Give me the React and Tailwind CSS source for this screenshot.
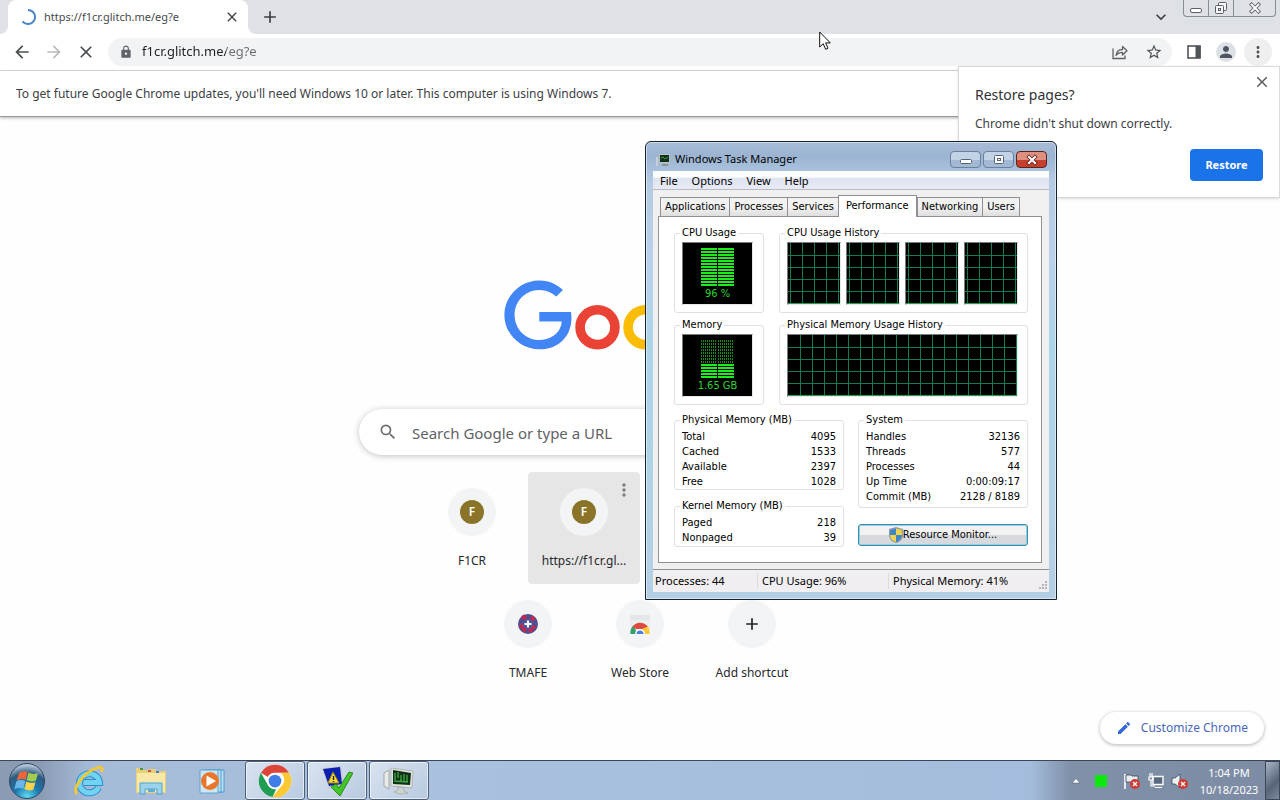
import {
  MdAdd,
  MdArrowBack,
  MdArrowForward,
  MdClose,
  MdEdit,
  MdExpandMore,
  MdLock,
  MdMoreVert,
  MdPerson,
  MdSearch,
  MdStarBorder,
} from 'react-icons/md'

const ChromeLogo = ({ className }) => (
  <svg viewBox="0 0 48 48" className={className} aria-hidden="true">
    <circle cx="24" cy="24" r="23" fill="#fff" />
    <path d="M24 1a23 23 0 0 1 19.9 11.5H24a11.5 11.5 0 0 0-10 5.8L4.1 12.5A23 23 0 0 1 24 1z" fill="#dc4437" />
    <path d="M4.1 12.5 14 29.7a11.5 11.5 0 0 0 11.8 5.6L20.5 46.7A23 23 0 0 1 4.1 12.5z" fill="#1f9d55" />
    <path d="M43.9 12.5A23 23 0 0 1 20.5 46.7L34 29.7a11.5 11.5 0 0 0-2-17.2z" fill="#fcc934" />
    <circle cx="24" cy="24" r="11.5" fill="#fff" />
    <circle cx="24" cy="24" r="9" fill="#3f7ee8" />
  </svg>
)

const GoogleLogo = () => (
  <svg viewBox="0 0 272 92" className="h-[92px] w-[272px]" role="img" aria-label="Google">
    <path
      d="M35.29 41.41V32H67c.31 1.64.47 3.58.47 5.68 0 7.06-1.93 15.79-8.15 22.01-6.05 6.3-13.78 9.66-24.02 9.66C16.32 69.35.36 53.89.36 34.91.36 15.93 16.32.47 35.3.47c10.5 0 17.98 4.12 23.6 9.49l-6.64 6.64c-4.03-3.78-9.49-6.72-16.97-6.72-13.86 0-24.7 11.17-24.7 25.03 0 13.86 10.84 25.03 24.7 25.03 8.99 0 14.11-3.61 17.39-6.89 2.66-2.66 4.41-6.46 5.1-11.65z"
      fill="#4285f4"
    />
    <circle cx="93.5" cy="47.2" r="17.4" fill="none" stroke="#ea4335" strokeWidth="9.6" />
    <circle cx="141.5" cy="47.2" r="17.4" fill="none" stroke="#fbbc05" strokeWidth="9.6" />
  </svg>
)

const TabStrip = () => (
  <div className="flex h-[34px] items-stretch bg-[#dee1e6]">
    <div className="w-2 bg-white">
      <div className="h-full rounded-br-lg bg-[#dee1e6]" />
    </div>
    <div className="flex w-[240px] items-center rounded-t-lg bg-white pl-3 pr-2">
      <svg viewBox="0 0 16 16" className="size-4" fill="none" aria-hidden="true">
        <path d="M8 1a7 7 0 1 1-5.500 11.300" stroke="#4a86d0" strokeWidth="2" />
      </svg>
      <span className="ml-2 grow text-[11px] text-[#45494d]">https://f1cr.glitch.me/eg?e</span>
      <button aria-label="Close tab" className="flex size-4 items-center justify-center">
        <MdClose className="size-4 text-[#3c4043]" />
      </button>
    </div>
    <div className="w-2 bg-white">
      <div className="h-full rounded-bl-lg bg-[#dee1e6]" />
    </div>
    <button aria-label="New tab" className="ml-1 flex w-5 items-center justify-center">
      <MdAdd className="size-5 text-[#3c4043]" />
    </button>
    <div className="grow" />
    <button aria-label="Search tabs" className="mr-3 flex w-5 items-center justify-center">
      <MdExpandMore className="size-5 text-[#3c4043]" />
    </button>
    <div className="mr-1 flex h-[17px] rounded-b border border-t-0 border-[#8a8f96]">
      <button aria-label="Minimize" className="flex w-[25px] items-center justify-center border-r border-[#8a8f96]">
        <svg viewBox="0 0 12 12" className="size-3" fill="#fff" stroke="#5b6068" aria-hidden="true">
          <rect x="0.5" y="6.5" width="11" height="4" rx="1.5" />
        </svg>
      </button>
      <button aria-label="Restore down" className="flex w-[25px] items-center justify-center border-r border-[#8a8f96]">
        <svg viewBox="0 0 14 14" className="size-[14px]" fill="#f4f5f7" stroke="#5b6068" aria-hidden="true">
          <rect x="4.5" y="1.5" width="8" height="8" rx="1" />
          <rect x="1.5" y="4.5" width="8" height="8" rx="1" />
          <rect x="4.5" y="7.5" width="2" height="2" />
        </svg>
      </button>
      <button aria-label="Close" className="flex w-[41px] items-center justify-center">
        <svg viewBox="0 0 12 12" className="size-3" aria-hidden="true">
          <path d="M2.500 2.500l7 7M9.500 2.500l-7 7" stroke="#5b6068" strokeWidth="3.6" strokeLinecap="square" />
          <path d="M2.500 2.500l7 7M9.500 2.500l-7 7" stroke="#fff" strokeWidth="1.8" strokeLinecap="square" />
        </svg>
      </button>
    </div>
  </div>
)

const Toolbar = () => (
  <div className="flex h-[37px] items-center border-b border-[#dcdddf] bg-white pl-3 pr-2">
    <div className="flex items-center gap-3">
      <button aria-label="Back">
        <MdArrowBack className="size-5 text-[#4b4e52]" />
      </button>
      <button aria-label="Forward">
        <MdArrowForward className="size-5 text-[#b9bbbe]" />
      </button>
      <button aria-label="Stop">
        <MdClose className="size-5 text-[#4b4e52]" />
      </button>
    </div>
    <div className="ml-3 flex h-7 grow items-center gap-[9px] rounded-full bg-[#f1f3f4] pl-[11px] pr-[9px]">
      <MdLock className="size-[14px] text-[#5f6368]" />
      <input
        aria-label="Address"
        defaultValue="f1cr.glitch.me/eg?e"
        className="min-w-0 grow bg-[linear-gradient(90deg,#202124_84px,#6a6e73_84px)] bg-clip-text text-[13px] text-transparent outline-none"
      />
      <button aria-label="Share this page" className="mr-2">
        <svg viewBox="0 0 16 16" className="size-4" fill="none" stroke="#5f6368" strokeWidth="1.3" aria-hidden="true">
          <path d="M1 4.5V14.5H13V11.5" />
          <path d="M4 11.5C4.5 7.5 7 5.5 10.5 5.5V2.5L15 6.800L10.5 11V8.300C7.5 8.300 5.5 9.300 4 11.5Z" strokeLinejoin="round" />
        </svg>
      </button>
      <button aria-label="Bookmark this tab">
        <MdStarBorder className="size-[18px] text-[#4f5358]" />
      </button>
    </div>
    <button aria-label="Side panel" className="ml-3 flex size-5 items-center justify-center">
      <svg viewBox="0 0 14 14" className="size-[14px]" aria-hidden="true">
        <rect x="1" y="1" width="12" height="12" fill="#fff" stroke="#4f5358" strokeWidth="1.6" />
        <rect x="8.5" y="1" width="5" height="12" fill="#4f5358" />
      </svg>
    </button>
    <button aria-label="Profile" className="ml-3 flex size-5 items-center justify-center rounded-full bg-[#dde0e5]">
      <MdPerson className="size-[18px] text-[#4f5560]" />
    </button>
    <button aria-label="Chrome menu" className="ml-2 flex size-7 items-center justify-center rounded-full bg-[#efefef]">
      <MdMoreVert className="size-[18px] text-[#4f5358]" />
    </button>
  </div>
)

const RestoreBubble = () => (
  <section className="absolute right-0 top-[66px] h-[132px] w-[322px] border border-[#d8dadd] bg-white px-4 shadow-sm">
    <button aria-label="Dismiss" className="absolute right-2 top-[6px]">
      <MdClose className="size-[18px] text-[#5a5d61]" />
    </button>
    <h2 className="pt-4 text-sm leading-6 text-[#2f3236]">Restore pages?</h2>
    <p className="mt-[7px] text-xs leading-5 text-[#3c4043]">Chrome didn't shut down correctly.</p>
    <div className="mt-[15px] flex justify-end">
      <button className="h-8 w-[73px] rounded bg-[#1a73e8] text-[11px] font-bold text-white">Restore</button>
    </div>
  </section>
)

const Shortcut = ({ label, active, children }) => (
  <a
    href="#"
    className={
      active
        ? 'relative flex size-28 flex-col items-center rounded bg-[#e6e6e6] pt-4'
        : 'relative flex size-28 flex-col items-center rounded pt-4'
    }
  >
    <span className="flex size-12 items-center justify-center rounded-full bg-[#f3f4f5]">{children}</span>
    <span className="mt-[15px] text-xs leading-5 text-[#26282b]">{label}</span>
    {active && <MdMoreVert className="absolute right-[6px] top-2 size-5 text-[#7b7d80]" />}
  </a>
)

const LetterIcon = () => (
  <span className="flex size-6 items-center justify-center rounded-full bg-[#8b7428] text-xs font-semibold text-white">
    F
  </span>
)

const NewTabPage = () => (
  <main className="relative flex grow flex-col items-center bg-[#fefefe] pt-[163px]">
    <GoogleLogo />
    <div className="mt-[37px] flex h-[46px] w-[562px] max-w-full items-center rounded-full bg-white px-[19px] shadow-[0_1px_6px_0_rgba(32,33,36,0.28)]">
      <MdSearch className="size-5 text-[#6b6f73]" />
      <input
        aria-label="Search"
        placeholder="Search Google or type a URL"
        className="ml-[14px] mt-[2px] grow text-[15px] outline-none placeholder:text-[#5f6266]"
      />
    </div>
    <div className="mt-[17px] grid w-[448px] grid-cols-4">
      <Shortcut label="F1CR">
        <LetterIcon />
      </Shortcut>
      <Shortcut label="https://f1cr.gl..." active>
        <LetterIcon />
      </Shortcut>
    </div>
    <div className="flex justify-center">
      <Shortcut label="TMAFE">
        <svg viewBox="0 0 20 20" className="size-5" aria-hidden="true">
          <circle cx="10" cy="10" r="10" fill="#4f4f8f" />
          <path d="M4 2l4 3M16 3l-3 3M2 13l4-2M13 18l-1-4M17 14l-4-2M5 17l3-3" stroke="#c22850" strokeWidth="4" />
          <circle cx="10" cy="10" r="5" fill="#4b5aa0" />
          <path d="M10 6.5v7M6.5 10h7" stroke="#fff" strokeWidth="2" />
        </svg>
      </Shortcut>
      <Shortcut label="Web Store">
        <svg viewBox="0 0 24 24" className="size-6" aria-hidden="true">
          <path d="M2 3h20v19H2z" fill="#ecefee" />
          <path d="M2 3h20v5H2z" fill="#e3e7e6" />
          <path d="M2.5 22a9.5 9.5 0 0 1 3-8.5L9.5 22z" fill="#35a06a" />
          <path d="M4.5 14.5a9.5 9.5 0 0 1 15.3 0L17 17H8z" fill="#dd4b3e" />
          <path d="M21.5 22a9.5 9.5 0 0 0-1.7-7.5L14 17l1 5z" fill="#fcc934" />
          <path d="M7 22a5 5 0 0 1 10 0z" fill="#fff" />
          <path d="M8.5 22a3.5 3.5 0 0 1 7 0z" fill="#4a80dd" />
        </svg>
      </Shortcut>
      <Shortcut label="Add shortcut">
        <MdAdd className="size-5 text-[#202124]" />
      </Shortcut>
    </div>
    <button className="absolute bottom-4 right-4 flex h-8 items-center gap-[9px] rounded-full bg-white px-4 text-xs text-[#4767b8] shadow-[0_1px_3px_1px_rgba(60,64,67,0.25)]">
      <MdEdit className="size-4 text-[#3367d6]" />
      Customize Chrome
    </button>
  </main>
)

const memoryStats = [
  ['Total', '4095'],
  ['Cached', '1533'],
  ['Available', '2397'],
  ['Free', '1028'],
]

const kernelStats = [
  ['Paged', '218'],
  ['Nonpaged', '39'],
]

const systemStats = [
  ['Handles', '32136'],
  ['Threads', '577'],
  ['Processes', '44'],
  ['Up Time', '0:00:09:17'],
  ['Commit (MB)', '2128 / 8189'],
]

const Group = ({ title, className, children }) => (
  <fieldset className={`min-w-0 rounded-[3px] border border-[#dde1e3] px-[7px] pt-[2px] ${className}`}>
    <legend className="-ml-[2px] px-[2px] leading-[14px]">{title}</legend>
    {children}
  </fieldset>
)

const StatTable = ({ rows }) => (
  <table className="w-full leading-[15px]">
    <tbody>
      {rows.map(([name, value]) => (
        <tr key={name}>
          <th scope="row" className="p-0 text-left font-normal">{name}</th>
          <td className="p-0 text-right">{value}</td>
        </tr>
      ))}
    </tbody>
  </table>
)

// thirteen 2px bars per column, the lowest `level` of them lit
const Meter = ({ level, label }) => (
  <div className="flex h-[63px] w-[71px] flex-col items-center border border-[#7d7d7d] border-b-[#e8e8e8] border-r-[#e8e8e8] bg-black pt-[5px] text-[#2bd42b]">
    <svg viewBox="0 0 33 39" className="h-[39px] w-[33px]" aria-hidden="true">
      {Array.from({ length: 13 }, (_, i) => {
        const lit = i >= 13 - level
        return (
          <g key={i} stroke={lit ? '#1fea1f' : '#1b8c1b'} strokeWidth="2" strokeDasharray={lit ? undefined : '1 1'}>
            <path d={`M0 ${i * 3 + 1}H16M17 ${i * 3 + 1}H33`} />
          </g>
        )
      })}
    </svg>
    <span className="leading-[14px]">{label}</span>
  </div>
)

// grid lines every 12px, the first vertical one at `start`
const Graph = ({ width, start, className }) => {
  const columns = []
  for (let x = start; x < width; x += 12) columns.push(x)
  return (
    <div className={`h-[63px] border border-[#7d7d7d] border-b-[#e8e8e8] border-r-[#e8e8e8] bg-black ${className}`}>
      <svg viewBox={`0 0 ${width} 61`} className="block size-full" shapeRendering="crispEdges" aria-hidden="true">
        {columns.map(x => (
          <rect key={x} x={x} y="0" width="1" height="61" fill="#187a50" />
        ))}
        {[12, 24, 36, 48].map(y => (
          <rect key={y} x="0" y={y} width={width} height="1" fill="#187a50" />
        ))}
        <rect x="0" y="60" width={width} height="1" fill="#1fa04a" />
      </svg>
    </div>
  )
}

const tabs = ['Applications', 'Processes', 'Services', 'Performance', 'Networking', 'Users']

const TaskManager = () => (
  <section
    aria-label="Windows Task Manager"
    className="absolute left-[645px] top-[141px] flex w-[412px] flex-col rounded-t-md border border-[#16222e] bg-[linear-gradient(180deg,#a9bcd6_0,#9bb4d2_14px,#b4cbe3_40px,#b9d1ea_120px,#add5ea_200px,#b4cfe4_100%)] px-[7px] pb-[7px] font-['DejaVu_Sans_Condensed','DejaVu_Sans',sans-serif] text-[11px] text-black shadow-[inset_0_0_0_1px_rgba(255,255,255,0.5)]"
  >
    <header className="flex h-[29px] items-center pl-[3px] pr-[2px] pt-[6px] font-['Noto_Sans',sans-serif]">
      <svg viewBox="0 0 14 14" className="size-[14px]" aria-hidden="true">
        <path d="M0 4h2v9H0z" fill="#c8d0d4" />
        <path d="M3 1h11v9H3z" fill="#b9c2bc" />
        <path d="M4 2h9v7H4z" fill="#12301c" />
        <path d="M5 5l2-1 2 2 3-2" stroke="#3f8e4a" fill="none" />
        <path d="M6 11h6v2H6z" fill="#8f958c" />
      </svg>
      <h1 className="ml-[5px] grow">Windows Task Manager</h1>
      <div className="flex gap-[2px]">
        <button aria-label="Minimize" className="flex h-[17px] w-[31px] items-center justify-center rounded-sm border border-[#6c809b] bg-[linear-gradient(180deg,#c3d3e6_50%,#a3b9d3_50%)]">
          <svg viewBox="0 0 12 12" className="size-3" fill="#fff" stroke="#53637a" aria-hidden="true">
            <rect x="0.5" y="5.5" width="11" height="4" rx="1" />
          </svg>
        </button>
        <button aria-label="Maximize" className="flex h-[17px] w-[31px] items-center justify-center rounded-sm border border-[#6c809b] bg-[linear-gradient(180deg,#c3d3e6_50%,#a3b9d3_50%)]">
          <svg viewBox="0 0 12 12" className="size-3" fill="#fff" stroke="#53637a" aria-hidden="true">
            <rect x="1.5" y="1.5" width="9" height="8" rx="1" />
            <rect x="4.5" y="4.5" width="3" height="2" />
          </svg>
        </button>
        <button aria-label="Close" className="flex h-[17px] w-[31px] items-center justify-center rounded-sm border border-[#5b2320] bg-[linear-gradient(180deg,#dd8f80_50%,#c5402c_50%)]">
          <svg viewBox="0 0 12 12" className="size-3" aria-hidden="true">
            <path d="M3 3l6 6M9 3L3 9" stroke="#6a2a28" strokeWidth="3.8" strokeLinecap="square" />
            <path d="M3 3l6 6M9 3L3 9" stroke="#fff" strokeWidth="2" strokeLinecap="square" />
          </svg>
        </button>
      </div>
    </header>
    <nav className="flex h-[19px] items-center gap-[14px] border-b border-[#b9bcc4] bg-[linear-gradient(180deg,#fbfcfe_35%,#dfe3f0_40%,#e8ebf5_100%)] pl-[7px] pt-[2px] font-['Noto_Sans',sans-serif]">
      <button>File</button>
      <button>Options</button>
      <button>View</button>
      <button>Help</button>
    </nav>
    <div className="bg-[#f0f0f0] pb-[6px] pl-[5px] pr-[7px] pt-[5px]">
      <div role="tablist" className="flex items-end pl-[2px]">
        {tabs.map(tab =>
          tab === 'Performance' ? (
            <button
              key={tab}
              role="tab"
              aria-selected="true"
              className="-mb-[1px] h-[22px] border border-b-0 border-[#8d9095] bg-white px-[7px]"
            >
              {tab}
            </button>
          ) : (
            <button
              key={tab}
              role="tab"
              aria-selected="false"
              className="-mr-[1px] h-[19px] border border-b-0 border-[#8d9095] bg-[linear-gradient(180deg,#f2f2f2_50%,#dedede_100%)] px-1"
            >
              {tab}
            </button>
          ),
        )}
      </div>
      <div role="tabpanel" className="border border-[#8d9095] bg-white pb-[15px] pl-[15px] pr-[13px] pt-[9px]">
        <div className="flex gap-[15px]">
          <Group title="CPU Usage" className="h-[87px] w-[90px] shrink-0">
            <Meter level={13} label="96 %" />
          </Group>
          <Group title="CPU Usage History" className="h-[87px] grow">
            <div className="flex gap-[5px]">
              {[0, 1, 2, 3].map(core => (
                <Graph key={core} width={52} start={2} className="w-[54px]" />
              ))}
            </div>
          </Group>
        </div>
        <div className="mt-[5px] flex gap-[15px]">
          <Group title="Memory" className="h-[87px] w-[90px] shrink-0">
            <Meter level={5} label="1.65 GB" />
          </Group>
          <Group title="Physical Memory Usage History" className="h-[87px] grow">
            <Graph width={229} start={12} className="w-[231px]" />
          </Group>
        </div>
        <div className="mt-2 grid grid-cols-2 gap-[14px]">
          <div className="flex flex-col gap-[9px]">
            <Group title="Physical Memory (MB)" className="h-[77px]">
              <StatTable rows={memoryStats} />
            </Group>
            <Group title="Kernel Memory (MB)" className="h-12">
              <StatTable rows={kernelStats} />
            </Group>
          </div>
          <div className="flex flex-col gap-4">
            <Group title="System" className="h-[95px]">
              <StatTable rows={systemStats} />
            </Group>
            <button className="flex h-[22px] items-center justify-center rounded-[3px] border border-[#3c8bab] bg-[linear-gradient(180deg,#f2f2f2_50%,#d6dade_50%)] shadow-[inset_0_0_0_1px_#8fd0e8]">
              <svg viewBox="0 0 14 16" className="h-4 w-[14px]" aria-hidden="true">
                <path d="M7 0L14 2V8C14 12 11 15 7 16C3 15 0 12 0 8V2Z" fill="#8d9bab" />
                <path d="M7 1.5V8H1.2V3Z" fill="#3f86c9" />
                <path d="M7 1.5V8H12.8V3Z" fill="#f2d349" />
                <path d="M7 8V15C4 14 1.2 11.5 1.2 8Z" fill="#f2d349" />
                <path d="M7 8V15C10 14 12.8 11.5 12.8 8Z" fill="#3f86c9" />
              </svg>
              Resource Monitor...
            </button>
          </div>
        </div>
      </div>
    </div>
    <footer className="flex h-[23px] items-center border-t border-[#8f9194] bg-[#f0eef0] font-['Noto_Sans',sans-serif]">
      <span className="w-[105px] border-r border-[#dcdcdc] pl-[2px]">Processes: 44</span>
      <span className="w-[131px] border-r border-[#dcdcdc] pl-1">CPU Usage: 96%</span>
      <span className="grow pl-1">Physical Memory: 41%</span>
      <svg viewBox="0 0 12 12" className="size-3 self-end" fill="#b4b4ba" aria-hidden="true">
        <path d="M8 1h2v2H8zM8 4h2v2H8zM8 7h2v2H8zM5 4h2v2H5zM5 7h2v2H5zM2 7h2v2H2z" />
      </svg>
    </footer>
  </section>
)

const StartOrb = () => (
  <svg viewBox="0 0 38 38" className="size-[38px]" aria-hidden="true">
    <defs>
      <radialGradient id="orb" cx="50%" cy="95%" r="90%">
        <stop offset="0" stopColor="#5fdcf2" />
        <stop offset="0.4" stopColor="#1a78b0" />
        <stop offset="0.75" stopColor="#2f5a80" />
        <stop offset="1" stopColor="#b4c6d8" />
      </radialGradient>
    </defs>
    <circle cx="19" cy="19" r="17.5" fill="url(#orb)" stroke="#33485f" />
    <path d="M11 11q4-3 8.5-1l-1.8 7.800q-4.500-2-9 .7z" fill="#e8663a" />
    <path d="M20.500 10.500q4 2.500 9.500.7l-2.200 7.500q-4.500 1.800-9.200-.6z" fill="#a4cc4f" />
    <path d="M8.300 19.500q4-2.500 9-.5l-1.900 7.800q-4.500-2-9 .5z" fill="#6ab6ea" />
    <path d="M18.300 19.500q4.500 2.300 9.200.7l-2.200 7.500q-4.500 1.700-9-.7z" fill="#fbd24a" />
  </svg>
)

const IeIcon = () => (
  <svg viewBox="0 0 32 32" className="size-8" fill="none" aria-hidden="true">
    <path d="M25.500 22.500a10 9.500 0 1 1 1-5H11" stroke="#2b8fc9" strokeWidth="7" />
    <path d="M25.500 22.500a10 9.500 0 1 1 1-5H11" stroke="#72d2f3" strokeWidth="5" />
    <path d="M4 29C-1 24 10 7 25 2.5c4-1 5 1 3.5 4.5" stroke="#f3c92f" strokeWidth="2.8" />
  </svg>
)

const ExplorerIcon = () => (
  <svg viewBox="0 0 32 32" className="size-8" aria-hidden="true">
    <path d="M1 3h6l2 2h4l1-1h6l2 2h9v22H1z" fill="#e9cf78" />
    <path d="M2 8h28v19H2z" fill="#f8e9a8" />
    <path d="M5 3h3v2H5z" fill="#3a9a4a" />
    <path d="M13 5h3v2h-3z" fill="#d0543a" />
    <path d="M21 6h3v2h-3z" fill="#3c7dc4" />
    <path d="M5 18h22v11h-5v-5H10v5H5z" fill="#9bd3ee" stroke="#4ea3cf" />
    <path d="M13 24h7v3h-7z" fill="#5fb0d8" />
  </svg>
)

const MediaIcon = () => (
  <svg viewBox="0 0 32 32" className="size-8" aria-hidden="true">
    <path d="M9 5h18v22H9z" fill="#bfe0f2" stroke="#4a9ccc" />
    <path d="M6 5h18v22H6z" fill="#bfe0f2" stroke="#4a9ccc" />
    <path d="M3 5h18v23H3z" fill="#cfe6f4" stroke="#5aa6d0" />
    <circle cx="13" cy="16" r="9" fill="#e8762c" />
    <path d="M9.5 10.5L19 16l-9.5 5.5z" fill="#fff" />
  </svg>
)

const CheckIcon = () => (
  <svg viewBox="0 0 32 32" className="size-8" aria-hidden="true">
    <path d="M1 3l19-2 3 20-15 3z" fill="#c8ccd0" />
    <path d="M2 4l17-2 2 17-13 2z" fill="#0a1fb0" />
    <path d="M12 7l6 11H7z" fill="#f7dd2e" stroke="#9b8210" />
    <path d="M12.5 11v4M12.5 16v1" stroke="#222" strokeWidth="1.4" />
    <path d="M10 22l5-3 3 4L28 7l4 1-13 23z" fill="#43c52c" stroke="#2a8a1a" />
  </svg>
)

const TaskManagerIcon = () => (
  <svg viewBox="0 0 32 32" className="size-8" aria-hidden="true">
    <path d="M1 8l5-3v19l-5-3z" fill="#e9ebe8" stroke="#8b908b" strokeWidth="0.7" />
    <path d="M8 3l22 3-1 17-21-2z" fill="#dfe3de" stroke="#a0a5a0" strokeWidth="0.7" />
    <path d="M10 5l18 3-1 12-17-1z" fill="#123018" />
    <path d="M12 8v7M15 7v6M18 10v6M21 9v7M24 10v7M11 16l14 1" stroke="#3ba63f" strokeWidth="1.4" />
    <path d="M15 22l6 1v3l4 2-8 1-6-2 4-2z" fill="#cfd3cd" stroke="#9a9f99" strokeWidth="0.6" />
  </svg>
)

const pinned = [
  { name: 'Internet Explorer', icon: <IeIcon /> },
  { name: 'Windows Explorer', icon: <ExplorerIcon /> },
  { name: 'Windows Media Player', icon: <MediaIcon /> },
  { name: 'Google Chrome', icon: <ChromeLogo className="size-[34px]" />, open: true },
  { name: 'Checker', icon: <CheckIcon />, open: true },
  { name: 'Task Manager', icon: <TaskManagerIcon />, open: true },
]

const ErrorBadge = () => (
  <>
    <circle cx="12" cy="12" r="5" fill="#d23b34" />
    <path d="M10 10l4 4M14 10l-4 4" stroke="#fff" strokeWidth="1.4" />
  </>
)

const Taskbar = () => (
  <footer className="flex h-10 items-stretch border-t border-[#3b4757] bg-[linear-gradient(90deg,#8b9bb4_0,#8b9bb4_40px,#a5bbd8_90px,#a9c1df_430px,#a4bddc_1030px,#8090a9_1070px,#7d8ca4_100%)]">
    <button aria-label="Start" className="flex w-[54px] items-center justify-center">
      <StartOrb />
    </button>
    <div className="ml-[5px] flex gap-[2px]">
      {pinned.map(({ name, icon, open }) => (
        <button
          key={name}
          aria-label={name}
          className={
            open
              ? 'flex w-[60px] items-center justify-center rounded-[3px] border border-[#4e5f78] bg-[linear-gradient(135deg,#d9e3f0,#b9cae0)] shadow-[inset_0_0_0_1px_rgba(255,255,255,0.6)]'
              : 'flex w-[60px] items-center justify-center'
          }
        >
          {icon}
        </button>
      ))}
    </div>
    <div className="grow" />
    <div className="flex items-center">
      <button aria-label="Show hidden icons" className="mr-[14px]">
        <svg viewBox="0 0 10 6" className="h-[6px] w-[10px]" aria-hidden="true">
          <path d="M5 0.5L9 5H1z" fill="#fff" stroke="#56647a" strokeWidth="0.6" />
        </svg>
      </button>
      <span className="size-3 bg-[#0be80b]" />
      <svg viewBox="0 0 18 18" className="ml-4 size-[18px]" aria-hidden="true">
        <path d="M2 2v15" stroke="#fff" strokeWidth="1.6" />
        <path d="M3 3h5l1 1h6v7H9L8 10H3z" fill="#e8ecf0" stroke="#3a4657" strokeWidth="0.8" />
        <ErrorBadge />
      </svg>
      <svg viewBox="0 0 18 18" className="ml-[6px] size-[18px]" fill="none" aria-hidden="true">
        <path d="M6 4.5h10v8H6z" fill="#5a6a80" stroke="#fff" strokeWidth="1.4" />
        <path d="M8 15.5h7M3 1v4M5 1v4M2 5h4v3H2zM4 8v6h4" stroke="#fff" strokeWidth="1.2" />
      </svg>
      <svg viewBox="0 0 18 18" className="ml-[6px] size-[18px]" aria-hidden="true">
        <path d="M1 6h3l5-4v14l-5-4H1z" fill="#eef1f4" stroke="#3a4657" strokeWidth="0.8" />
        <ErrorBadge />
      </svg>
    </div>
    <div className="ml-2 flex w-16 flex-col items-center justify-center text-[11px] leading-[17px] text-white">
      <time>1:04 PM</time>
      <time>10/18/2023</time>
    </div>
    <button
      aria-label="Show desktop"
      className="ml-1 w-[15px] border border-[#3c4859] bg-[linear-gradient(135deg,#a9b5c6,#56647a_60%,#7b8aa0)]"
    />
  </footer>
)

const Cursor = () => (
  <svg viewBox="0 0 12 19" className="absolute left-[819px] top-[31px] h-[19px] w-3" aria-hidden="true">
    <path d="M0.7 1V16L4.2 12.7L6.7 18.3L9 17.2L6.6 11.9H11.3Z" fill="#fff" stroke="#111" />
  </svg>
)

const App = () => (
  <div className="relative flex min-h-screen flex-col bg-white font-['Noto_Sans','Open_Sans',sans-serif]">
    <TabStrip />
    <Toolbar />
    <div className="z-10 flex h-[46px] items-center border-b border-[#9a9a9a] bg-white pl-4 text-xs text-[#3c4043] shadow-[0_1px_3px_rgba(0,0,0,0.3)]">
      To get future Google Chrome updates, you'll need Windows 10 or later. This computer is using Windows 7.
    </div>
    <NewTabPage />
    <Taskbar />
    <div className="absolute inset-x-0 top-0 z-20">
      <RestoreBubble />
      <TaskManager />
      <Cursor />
    </div>
  </div>
)

export default App
